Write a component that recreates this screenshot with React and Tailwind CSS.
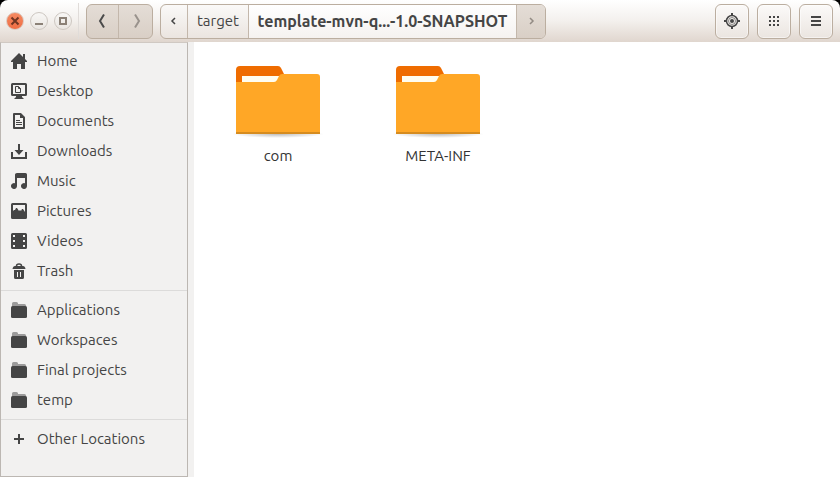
import React from "react";

const INK = "#454545";

function Glyph({ children, size = 16 }) {
  return (
    <svg width={size} height={size} viewBox={`0 0 ${size} ${size}`} fill="currentColor" className="shrink-0" aria-hidden="true">
      {children}
    </svg>
  );
}

const folderIcon = (
  <>
    <path d="M1 4V1.500Q1 0 2.500 0H5.500Q7 0 7 1.500V2H13.500Q15 2 15 3.500V4z" opacity=".5" />
    <rect y="4" width="16" height="12" rx="1.500" />
  </>
);

const icons = {
  home: (
    <path d="M8 0 0 8v1h2v7h4v-5h4v5h4V9h2V8l-2-2V1h-2v3z" />
  ),
  desktop: (
    <>
      <path fillRule="evenodd" d="M1.500 0h13Q16 0 16 1.500v10Q16 13 14.500 13h-13Q0 13 0 11.500v-10Q0 0 1.500 0zM2 2v9h12V2z" />
      <path d="M5 14h6l2 2H3zM5 12.500h6V14H5z" />
      <path d="M4.500 3.500h3l2 2v4h-5zM7.500 3.500v2h2" fill="none" stroke="currentColor" />
    </>
  ),
  documents: (
    <>
      <path d="M3 1h6.500L13 4.500V15H3z" fill="none" stroke="currentColor" strokeWidth="2" strokeLinejoin="round" />
      <path d="M9 1v4h4zM5 7h4v1H5zM5 9h6v1H5zM5 11h6v1H5z" />
    </>
  ),
  downloads: (
    <path d="M7 1h2v6h3.500L8 12 3.500 7H7zM0 9h2v5h12V9h2v7H0z" />
  ),
  music: (
    <path d="M6 0h8.500Q16 0 16 1.500V13a3 3 0 1 1-2-2.800V5H6v8a3 3 0 1 1-2-2.800V1.500Q4 0 6 0z" />
  ),
  pictures: (
    <path fillRule="evenodd" d="M1.500 0h13Q16 0 16 1.500v13q0 1.500-1.500 1.500h-13Q0 16 0 14.500v-13Q0 0 1.500 0zM2 2v6l1-1 1 0 1-2 1 0 2 3 1-1 1 1 1-2 1 0 2 3V2z" />
  ),
  videos: (
    <path fillRule="evenodd" d="M1.500 0h13Q16 0 16 1.500v13q0 1.500-1.500 1.500h-13Q0 16 0 14.500v-13Q0 0 1.500 0zM2 2v2h2V2zM2 7v2h2V7zM2 12v2h2v-2zM12 2v2h2V2zM12 7v2h2V7zM12 12v2h2v-2z" />
  ),
  trash: (
    <>
      <path d="M5.500 3Q5.500 1 8 1t2.500 2" fill="none" stroke="currentColor" strokeWidth="1.500" />
      <path d="M4 3h8q2 0 2.500 3h-13Q2 3 4 3z" />
      <path fillRule="evenodd" d="M3 7h10v7.500q0 1.500-1.500 1.500h-7Q3 16 3 14.500zM6 9v5h1V9zM9 9v5h1V9z" />
    </>
  ),
  folder: folderIcon,
  plus: <path d="M7 3h2v4h4v2H9v4H7V9H3V7h4z" />,
};

const groups = [
  [
    ["Home", "home"],
    ["Desktop", "desktop"],
    ["Documents", "documents"],
    ["Downloads", "downloads"],
    ["Music", "music"],
    ["Pictures", "pictures"],
    ["Videos", "videos"],
    ["Trash", "trash"],
  ],
  [
    ["Applications", "folder"],
    ["Workspaces", "folder"],
    ["Final projects", "folder"],
    ["temp", "folder"],
  ],
  [["Other Locations", "plus"]],
];

function Place({ name, icon }) {
  return (
    <li>
      <a href="#" className="flex h-[30px] items-center gap-2.5 px-2.5">
        <Glyph>{icons[icon]}</Glyph>
        <span>{name}</span>
      </a>
    </li>
  );
}

function Folder({ name }) {
  return (
    <li className="w-40">
      <button type="button" className="flex w-full flex-col items-center gap-1.5">
        <svg width="96" height="76" viewBox="0 0 96 76" aria-hidden="true">
          <defs>
            <radialGradient id={`shade-${name}`}>
              <stop offset="0" stopColor="#000" stopOpacity=".26" />
              <stop offset="1" stopColor="#000" stopOpacity="0" />
            </radialGradient>
          </defs>
          <ellipse cx="48" cy="70" rx="46" ry="4" fill={`url(#shade-${name})`} />
          <path d="M6 30V6q0-4 4-4h38q2 0 3 2l5 10v16z" fill="#ef6c00" />
          <path d="M12 12h38v12H12z" fill="#fffdf0" />
          <path d="M6 18h38q2 0 3-2l2-4q1-2 3-2h35q3 0 3 3v57H6z" fill="#ffa726" />
          <path d="M6 68h84v2H6z" fill="#d68c20" />
        </svg>
        <span className="leading-5 text-[#333333]">{name}</span>
      </button>
    </li>
  );
}

function ToolButton({ label, children }) {
  return (
    <button
      type="button"
      aria-label={label}
      className="flex h-[35px] w-[34px] items-center justify-center rounded-md border border-[#bbaea0] bg-linear-to-b from-[#fbfaf9] to-[#ebe5e0] shadow-[inset_0_0_0_1px_#ffffff80]"
    >
      {children}
    </button>
  );
}

function WindowButton({ label, close, children }) {
  return (
    <button
      type="button"
      aria-label={label}
      className={
        close
          ? "flex size-[18px] items-center justify-center rounded-full border border-[#dccbc2] bg-linear-to-b from-[#f58a62] to-[#ef6d43] text-[#703522]"
          : "flex size-[18px] items-center justify-center rounded-full border border-[#cdc7c1] bg-linear-to-b from-[#f8f7f5] to-[#eae6e2] text-[#8b8177]"
      }
    >
      {children}
    </button>
  );
}

function Chevron({ right }) {
  return (
    <svg width="10" height="16" viewBox="0 0 10 16" fill="none" stroke="currentColor" strokeWidth="2" aria-hidden="true">
      <path d={right ? "M2 1.500 6 8l-4 6.500" : "M8 1.500 4 8l4 6.500"} />
    </svg>
  );
}

function SmallChevron({ right }) {
  return (
    <svg width="8" height="8" viewBox="0 0 8 8" fill="none" stroke="currentColor" strokeWidth="1.500" aria-hidden="true">
      <path d={right ? "M3 1l3 3-3 3" : "M5 1L2 4l3 3"} />
    </svg>
  );
}

function HeaderBar() {
  return (
    <header className="flex h-[42px] items-center justify-between rounded-t-lg bg-linear-to-b from-white via-[#f3f0ed] to-[#e0d6ce] pr-[7px] pl-1.5">
      <div className="flex items-center">
        <div className="flex gap-1.5">
          <WindowButton label="Close" close>
            <Glyph size={10}>
              <path d="M1.500 1.500l7 7m0-7l-7 7" stroke="currentColor" strokeWidth="2" />
            </Glyph>
          </WindowButton>
          <WindowButton label="Minimize">
            <Glyph size={10}>
              <path d="M1 7h8v2H1z" />
            </Glyph>
          </WindowButton>
          <WindowButton label="Maximize">
            <Glyph size={10}>
              <path d="M2 2h6v6H2z" fill="none" stroke="currentColor" strokeWidth="2" />
            </Glyph>
          </WindowButton>
        </div>
        <div className="ml-1.5 h-9 w-px bg-[#e0dcd9]" />
        <div className="ml-[7px] flex h-[35px] w-[67px] divide-x divide-[#c3b7ab] rounded-md border border-[#bbaea0] bg-linear-to-b from-[#e4ddd6] to-[#d9cfc6]">
          <button type="button" aria-label="Back" className="flex w-8 items-center justify-center pr-1 text-[#4a4a4a]">
            <Chevron />
          </button>
          <button type="button" aria-label="Forward" className="flex flex-1 items-center justify-center pl-1 text-[#99928c]">
            <Chevron right />
          </button>
        </div>
        <nav
          aria-label="Path"
          className="ml-[7px] flex h-[35px] divide-x divide-[#c3b7ab] overflow-hidden rounded-md border border-[#bbaea0] bg-linear-to-b from-[#faf9f8] to-[#ebe5e0]"
        >
          <button type="button" aria-label="Scroll path left" className="flex w-[27px] items-center justify-center">
            <SmallChevron />
          </button>
          <button type="button" className="w-[61px] text-center">
            target
          </button>
          <button type="button" aria-current="page" className="w-[268px] bg-linear-to-b from-white to-[#f5f2f0] text-center text-base leading-5 font-bold whitespace-nowrap">
            template-mvn-q...-1.0-SNAPSHOT
          </button>
          <button type="button" aria-label="Scroll path right" className="flex w-7 items-center justify-center bg-linear-to-b from-[#e4ddd6] to-[#d9cfc6] text-[#938b84]">
            <SmallChevron right />
          </button>
        </nav>
      </div>
      <div className="flex gap-2">
        <ToolButton label="Locate">
          <Glyph>
            <circle cx="8" cy="8" r="5.500" fill="none" stroke="currentColor" strokeWidth="1.500" />
            <circle cx="8" cy="8" r="3.500" fill="none" stroke="currentColor" opacity=".6" />
            <circle cx="8" cy="8" r="2" />
            <path d="M7 0h2v3H7zM7 13h2v3H7zM0 7h3v2H0zM13 7h3v2h-3z" />
          </Glyph>
        </ToolButton>
        <ToolButton label="Icon view">
          <Glyph size={10}>
            <path d="M0 0h2v2H0zM4 0h2v2H4zM8 0h2v2H8zM0 4h2v2H0zM4 4h2v2H4zM8 4h2v2H8zM0 8h2v2H0zM4 8h2v2H4zM8 8h2v2H8z" />
          </Glyph>
        </ToolButton>
        <ToolButton label="Menu">
          <Glyph size={10}>
            <path d="M0 0h10v2H0zM0 4h10v2H0zM0 8h10v2H0z" />
          </Glyph>
        </ToolButton>
      </div>
    </header>
  );
}

export default function App() {
  return (
    <div
      className="flex min-h-screen flex-col bg-black font-['Ubuntu','Noto_Sans',sans-serif] text-[15px] leading-5"
      style={{ color: INK }}
    >
      <HeaderBar />
      <div className="flex flex-1 bg-white">
        <aside className="w-[188px] shrink-0 border border-[#bcb7b2] border-t-[#d0c9c3] bg-[#f2f1f0] pt-[3px]">
          {groups.map((places, i) => (
            <ul key={i} className={i > 0 ? "mt-1 border-t border-[#dcdbda] pt-1" : ""}>
              {places.map(([name, icon]) => (
                <Place key={name} name={name} icon={icon} />
              ))}
            </ul>
          ))}
        </aside>
        <div className="w-1.5 shrink-0 bg-[#f2f1f0]" />
        <main className="flex-1 pt-[22px] pl-1">
          <ul className="flex flex-wrap">
            <Folder name="com" />
            <Folder name="META-INF" />
          </ul>
        </main>
      </div>
    </div>
  );
}
